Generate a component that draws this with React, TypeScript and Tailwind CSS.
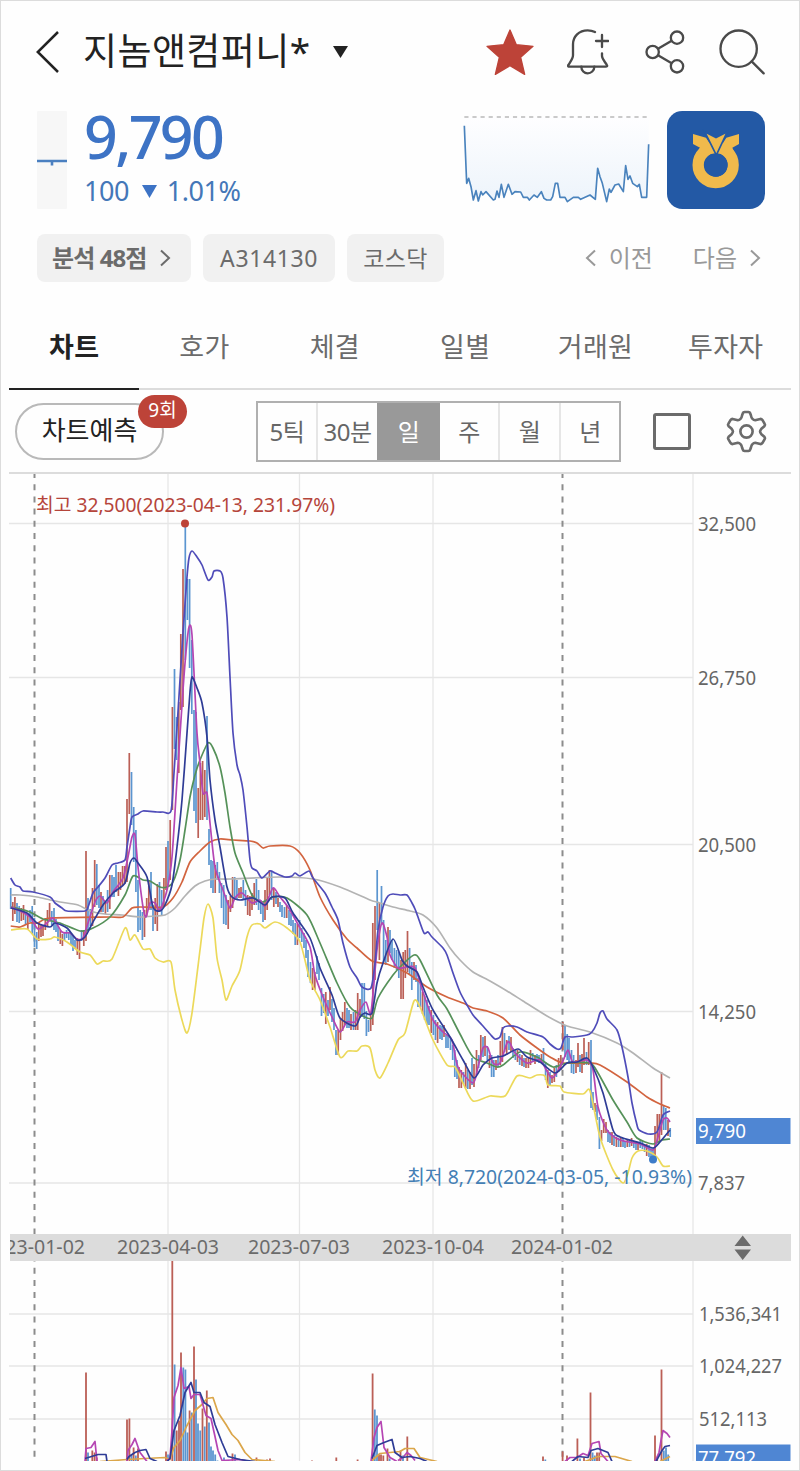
import React from 'react';

type Candle = [number, number, number, 'r' | 'b'];
type Bar = [number, number, 'r' | 'b'];

const RED = '#bb5f56';
const BLUE = '#5b95d0';

// x, high, low, direction
const CANDLES = `
10.7 888 909 b,12.8 902 921 r,14.9 897 914 r,17 903 922 b,19.2 906 923 b,21.3 908 921 r,23.5 905 920 r,25.6 912 925 b,27.8 915 930 r,30 910 922 b,
32.2 906 934 b,34.5 918 947 b,36.7 932 949 b,38.8 922 941 r,41 924 937 r,43 925 936 r,45.3 918 930 r,47.5 910 926 r,49.6 903 920 r,51.8 911 925 b,
54 908 930 b,56 919 932 b,58 926 941 b,60.3 930 944 r,62.4 934 946 r,64.5 933 941 b,66.6 930 938 b,68.8 932 940 b,71 933 945 b,73 936 951 b,
75 940 949 b,77.3 938 955 r,79.5 940 959 r,81.6 930 941 b,83.8 930 946 r,86 851 941 r,88 898 930 b,90.3 909 926 b,92.5 888 926 r,94.7 860 907 r,
96.8 864 905 b,99 885 908 b,101 892 912 r,103 896 912 b,105.4 903 914 r,107.6 890 912 b,109.8 875 909 r,112 875 897 b,114 877 897 b,116 865 892 b,
118.4 872 896 r,120.5 872 890 r,122.6 866 886 r,124.8 866 884 r,127 799 882 r,129.3 753 814 r,131.5 772 825 b,133.7 807 862 b,135.9 830 892 b,138 880 932 b,
140.2 910 930 b,142.4 912 940 b,144.5 910 937 r,146.7 898 916 r,148.8 880 910 r,151 872 910 b,153 905 931 b,155.2 898 924 r,157.3 884 931 r,159.5 882 912 b,
161.7 890 915 b,163.9 878 906 r,166 847 890 r,168 841 885 b,170.2 820 880 r,172.4 707 810 r,174.5 669 749 b,176.6 717 760 b,178.8 702 773 r,180.8 634 710 r,
183 569 707 r,185.3 525 660 b,187.4 579 620 b,189.6 579 668 b,191.8 640 714 b,194 710 811 b,196 712 823 b,198.2 788 838 r,200.4 763 820 r,202.6 761 820 r,
204.8 770 817 r,207 716 820 b,209 829 865 b,211 860 888 b,213 861 893 b,215.2 865 893 r,217.3 862 880 b,219.4 872 893 b,221.5 883 908 b,223.7 885 924 b,
226 895 925 b,228.2 900 929 r,230.4 896 912 r,232.6 877 908 r,234.7 877 900 b,236.9 880 900 b,239 888 898 r,241 887 898 r,243.3 880 900 b,245.5 890 906 b,
247.7 895 915 r,249.9 896 916 r,252 893 910 r,254.2 883 905 r,256.4 879 905 b,258.6 890 910 b,260.8 900 914 b,263 902 922 b,265 890 920 r,267.2 878 910 r,
269.4 870 895 r,271.6 872 900 b,273.8 888 907 r,276 892 904 b,278 898 907 r,280 902 912 b,282 905 917 b,284.5 907 918 b,286.7 905 918 r,289 910 925 b,
291 913 926 b,293 920 934 b,295.2 923 945 b,297.4 924 945 r,299.6 920 938 b,301.8 928 942 b,304 933 948 b,306 940 958 b,308 950 977 b,310.5 962 983 b,
312.6 968 990 r,314.8 972 990 r,317 956 974 b,319 963 980 b,321.5 988 1016 b,323.7 994 1013 b,325.8 992 1024 r,328 1000 1016 b,330 987 1010 r,332 999 1022 b,
334 1008 1030 b,336 1030 1055 b,338.2 1030 1055 r,340.5 1018 1040 r,342.6 1012 1031 r,344.8 1002 1025 r,347 1008 1028 b,349 1010 1028 b,351 1014 1030 r,353.5 1012 1030 b,
355.6 1010 1030 r,357.7 993 1030 r,360 999 1018 r,362 983 1017 b,364.3 983 1019 b,366.4 1011 1036 b,368.5 1020 1032 b,370.7 1014 1031 r,372.8 923 1025 r,375 906 980 r,
377.2 870 930 b,379.4 903 960 r,381.5 886 925 b,383.6 920 962 b,385.8 940 965 b,388 927 962 r,390 930 953 b,392 940 960 b,394.4 948 968 b,396.6 950 970 b,
398.8 952 978 b,401 960 999 r,403.2 952 999 r,405.3 950 978 r,407.5 931 972 r,409.6 948 974 b,411.8 962 990 b,414 962 980 r,416 965 982 b,418 978 1007 b,
420.4 982 1007 b,422.6 992 1014 r,424.7 996 1020 b,427 1000 1025 b,429 1006 1025 b,431.2 1010 1033 r,433.4 1015 1035 b,435.5 1020 1040 b,437.6 1022 1043 r,440 1025 1039 b,
442 1026 1040 b,444 1025 1037 r,446 1035 1048 b,448 1036 1048 b,450.5 1038 1050 b,452.7 1045 1060 b,454.8 1050 1077 b,457 1060 1079 b,459 1067 1088 r,461.3 1070 1088 r,
463.5 1072 1084 b,465.7 1063 1088 r,467.8 1070 1089 b,470 1072 1089 r,472 1058 1085 b,474 1064 1087 r,476.5 1050 1075 r,478.7 1055 1068 b,480.8 1035 1060 r,483 1037 1057 b,
485 1036 1056 r,487.3 1046 1060 b,489.5 1055 1068 r,491.6 1055 1077 b,493.8 1060 1077 b,496 1060 1070 r,498 1055 1067 b,500.3 1041 1065 r,502.4 1027 1062 r,504.5 1033 1052 b,
506.7 1040 1055 r,509 1036 1050 b,511 1037 1052 r,513 1048 1058 b,515.4 1050 1060 b,517.5 1050 1062 r,519.7 1054 1065 b,522 1055 1066 r,524 1058 1067 b,526 1058 1068 r,
528.4 1057 1068 r,530.5 1050 1065 r,532.7 1053 1062 b,535 1055 1064 r,537 1054 1062 b,539 1055 1063 b,541.5 1054 1063 r,543.5 1048 1065 b,545.6 1062 1080 b,547.8 1070 1088 r,
550 1072 1085 b,552 1075 1083 r,554.3 1068 1082 r,556.4 1065 1077 b,558.6 1058 1072 r,560.8 1055 1070 r,562.8 1022 1050 r,565 1025 1057 b,567.2 1034 1060 b,569 1038 1064 b,
571.5 1050 1073 b,573.6 1055 1074 b,576 1060 1073 r,578 1043 1067 r,580 1055 1072 b,582 1054 1073 r,584 1038 1065 r,586.5 1052 1065 b,588.7 1042 1065 r,591 1040 1108 b,
593 1092 1110 b,595 1103 1112 r,597 1105 1120 b,599.4 1117 1149 b,601.5 1130 1141 r,603.7 1119 1133 r,606 1122 1133 r,608 1130 1142 b,610 1132 1143 b,612 1132 1145 r,
614 1135 1146 b,616.4 1137 1147 r,618.6 1138 1147 b,620.8 1138 1147 r,623 1138 1147 b,625 1141 1148 b,627.3 1140 1147 r,629.5 1140 1147 b,631.6 1138 1146 r,633.8 1142 1148 b,
636 1142 1150 b,638 1142 1150 r,640.2 1140 1148 b,642.4 1141 1149 b,644.6 1144 1152 b,646.7 1144 1156 r,649 1145 1157 b,651 1148 1160 b,653 1148 1160 b,655 1126 1158 r,
657.3 1114 1142 r,659.4 1114 1141 r,661.5 1072 1135 r,663.7 1105 1130 b,665.8 1108 1130 b,668 1120 1136 r,670.2 1128 1137 b`
  .trim()
  .split(',')
  .map((row) => {
    const [x, hi, lo, dir] = row.trim().split(' ');
    return [Number(x), Number(hi), Number(lo), dir] as Candle;
  });

// x, top, direction
const VOLUMES = `
86 1372 r,88 1452 b,92.3 1450 r,94.6 1452 r,96.8 1457 r,127 1419 r,129.4 1418 r,131.5 1454 b,133.6 1447 r,135.8 1455 b,138 1448 r,166 1451 r,168 1454 b,
172.3 1260 r,174.6 1364 b,176.7 1430 r,179 1420 r,181 1352 r,183.3 1367 b,185.4 1369 b,187.5 1432 b,189.6 1410 r,191.7 1412 b,194 1346 r,196 1379 b,198 1423 b,
200.2 1430 b,202.5 1408 r,204.7 1426 b,206.8 1390 r,209 1422 b,211 1446 b,213 1450 b,215.2 1454 b,217.5 1460 b,224 1457 b,232.5 1453 r,235 1454 b,256.5 1457 r,
267 1459 r,270 1458 r,312 1460 r,336.3 1457 r,357.6 1459 r,372.6 1373 r,374.8 1409 b,377 1415 b,379 1454 r,381 1454 r,383.3 1455 r,387.5 1448 r,389.6 1458 b,
400.5 1450 r,403 1455 b,407.3 1436 r,543 1456 r,545.3 1459 b,562.6 1451 r,567 1455 r,577.4 1438 r,580 1458 b,584 1457 r,590.5 1392 r,592.6 1452 b,594.8 1455 b,
597 1452 r,599.2 1452 r,655 1435 r,657.2 1458 r,661.5 1369 r,663.8 1450 b,666 1447 b,668.2 1454 b`
  .trim()
  .split(',')
  .map((row) => {
    const [x, top, dir] = row.trim().split(' ');
    return [Number(x), Number(top), dir] as Bar;
  });

const PRICE_LINES = [
  {
    name: 'ma120',
    color: '#b3b3b3',
    points:
      '10.7,895 20,895 37,897 50,900 60,902 78,905 90,911 105,914 122,915 140,917 155,916 165,915 175,908 185,896 195,886 205,881 215,879 230,879 280,877 313,879 340,887 370,900 377,902 393,907 410,911 423,915 437,928 450,948 460,960 473,972 490,981 507,991 523,1001 547,1016 567,1026 590,1032 617,1043 633,1053 653,1068 670,1078',
  },
  {
    name: 'bandLow',
    color: '#ecd95a',
    points:
      '11,930 27,929 37,939 50,939 55,937 67,942 80,952 90,955 97,964 103,961 112,959 125,928 130,940 135,935 143,949 150,949 155,958 163,962 171,962 175,990 182,1020 187,1033 192,1013 200,950 204,918 208,904 213,918 217,958 222,980 226,1000 232,986 240,970 247,937 252,925 260,924 265,928 275,922 287,928 300,942 310,980 320,1000 330,1027 340,1057 348,1051 357,1051 362,1046 370,1048 375,1070 380,1078 388,1063 398,1040 405,1033 414,1001 420,1007 433,1040 447,1065 455,1067 463,1083 473,1101 490,1096 505,1096 517,1076 530,1078 537,1075 545,1076 548,1085 560,1086 564,1092 583,1094 590,1091 600,1137 613,1170 623,1183 628,1173 632,1158 638,1151 647,1151 657,1157 663,1166 670,1166',
  },
  {
    name: 'ma60',
    color: '#d2643f',
    points:
      '10.7,926 20,927 30,923 38,923 50,918 110,917 123,917 132,908 140,907 163,907 173,898 182,882 190,862 200,851 210,842 220,839 233,840 250,841 257,843 263,848 270,846 290,846 300,853 310,870 320,897 333,920 347,939 357,948 372,961 387,964 407,973 427,987 447,997 463,1003 473,1008 487,1011 503,1018 520,1035 537,1048 550,1057 563,1063 590,1063 600,1065 627,1082 647,1097 660,1104 670,1108',
  },
  {
    name: 'ma20',
    color: '#559159',
    points:
      '11,907 20,909 30,912 43,919 60,923 80,931 93,928 110,917 125,895 133,876 143,880 150,881 160,887 167,887 173,882 180,860 185,830 190,797 195,775 200,760 208,743 213,748 220,767 225,793 230,827 235,853 243,873 252,895 262,902 273,897 287,898 307,915 320,943 337,983 350,1007 363,1016 372,1018 378,998 393,975 403,964 414,955 420,960 437,995 447,1009 460,1034 473,1057 487,1063 497,1067 503,1065 520,1052 537,1057 553,1067 567,1063 590,1063 598,1073 613,1100 627,1122 637,1138 653,1144 662,1140 670,1139',
  },
  {
    name: 'ma5',
    color: '#b545b3',
    points:
      '11,907 20,911 30,917 38,929 47,923 53,918 62,932 70,933 77,939 83,938 88,923 95,902 100,896 107,903 113,892 123,878 128,857 132,837 135,835 138,867 143,907 146,917 150,903 155,903 160,910 167,890 172,857 177,780 183,690 186,652 189,627 192,635 197,733 200,763 203,793 207,793 210,823 215,867 223,890 230,908 235,898 242,893 252,903 260,900 265,906 273,888 280,897 288,907 300,928 310,947 315,975 323,997 332,1017 340,1032 347,1022 355,1022 360,1010 366,1002 371,1012 377,950 382,923 387,937 390,955 398,968 407,967 415,968 423,992 433,1020 443,1032 452,1040 458,1067 473,1083 478,1067 483,1048 488,1048 493,1063 500,1063 507,1043 510,1043 515,1053 527,1063 540,1060 552,1078 562,1063 568,1050 573,1062 587,1060 593,1070 598,1107 607,1130 620,1140 640,1144 653,1150 658,1137 663,1120 667,1118 670,1122',
  },
  {
    name: 'ma10',
    color: '#2f3c96',
    points:
      '11,908 27,913 37,923 50,927 55,923 67,928 77,940 85,937 93,922 103,905 113,893 125,883 130,863 134,858 138,863 147,877 153,907 160,911 165,905 172,885 177,847 182,800 187,733 190,692 192,677 197,688 202,703 207,737 210,780 215,820 220,847 227,887 232,897 240,900 253,898 265,905 272,897 285,898 293,913 310,938 320,968 332,995 340,1018 355,1026 360,1017 365,1013 372,1013 377,983 383,963 393,939 402,960 407,966 417,972 423,987 433,1010 450,1037 463,1060 474,1078 483,1065 492,1058 503,1056 518,1049 527,1057 540,1062 555,1073 567,1063 577,1062 587,1058 593,1067 603,1093 613,1130 620,1137 640,1143 653,1148 660,1142 670,1130',
  },
  {
    name: 'bandHigh',
    color: '#4f4cb9',
    points:
      '10.7,878 15,885 20,887 23,891 33,892 50,897 55,903 62,908 67,911 85,911 88,907 93,893 98,887 105,878 112,865 118,863 125,860 127,847 130,827 132,817 138,814 143,811 157,812 163,812 171,811 174,773 178,712 183,633 187,577 189,558 192,551 197,557 202,565 208,580 212,577 214,571 220,571 223,578 227,617 230,677 233,733 237,765 240,775 243,790 247,827 250,860 252,868 257,871 262,878 270,871 275,873 285,877 292,876 295,873 300,876 309,871 313,878 325,893 332,907 338,920 343,943 350,967 357,978 362,987 371,988 375,963 378,930 383,907 388,896 393,894 400,895 407,895 412,903 415,909 418,917 424,933 428,932 432,937 443,948 447,955 453,973 460,992 467,1005 473,1015 482,1025 490,1034 495,1039 500,1037 503,1028 508,1026 517,1027 527,1032 543,1037 550,1044 557,1049 561,1048 565,1037 573,1037 587,1035 592,1032 597,1023 600,1013 603,1011 607,1019 617,1030 622,1047 628,1077 632,1103 637,1125 639,1130 648,1134 657,1132 663,1115 670,1111',
  },
];

const VOLUME_LINES = [
  { color: '#dba64a', points: '100,1461 127,1459 145,1458 165,1457 170,1459 174,1447 180,1440 187,1425 195,1410 202,1404 207,1398 213,1397 218,1412 226,1424 232,1434 238,1440 245,1452 252,1459 275,1461' },
  { color: '#dba64a', points: '372,1460 380,1453 390,1452 400,1451 405,1448 414,1448 420,1457 437,1461' },
  { color: '#dba64a', points: '585,1461 598,1456 615,1456 632,1461' },
  { color: '#dba64a', points: '660,1461 670,1456' },
  { color: '#b545b3', points: '85,1461 86,1448 91,1447 95,1441 97,1461' },
  { color: '#b545b3', points: '127,1461 128,1450 132,1444 135,1438 140,1452 147,1461' },
  { color: '#b545b3', points: '167,1460 170,1458 172,1430 174,1397 178,1385 181,1367 184,1388 189,1386 191,1398 194,1394 200,1394 204,1408 206,1415 211,1418 215,1436 218,1450 222,1460 240,1459 250,1461' },
  { color: '#b545b3', points: '371,1461 374,1437 377,1427 381,1421 384,1447 390,1457 397,1461' },
  { color: '#b545b3', points: '398,1460 403,1457 407,1452 411,1455 415,1460' },
  { color: '#b545b3', points: '565,1461 570,1457 577,1457 583,1453 588,1455 592,1443 599,1441 601,1453 608,1461' },
  { color: '#b545b3', points: '655,1461 659,1452 661,1440 663,1430 667,1433 670,1437' },
  { color: '#2f3c96', points: '85,1458 98,1454 106,1454 107,1461' },
  { color: '#2f3c96', points: '127,1459 129,1456 135,1452 140,1450 146,1449 150,1458 157,1461' },
  { color: '#2f3c96', points: '167,1461 170,1458 174,1430 180,1415 185,1392 191,1382 194,1392 200,1392 204,1402 210,1406 215,1424 222,1442 228,1456 240,1459 255,1461' },
  { color: '#2f3c96', points: '372,1458 377,1445 384,1442 392,1439 395,1452 402,1457 410,1456 420,1458 427,1461' },
  { color: '#2f3c96', points: '572,1461 578,1456 588,1457 591,1450 598,1448 608,1452 612,1461' },
  { color: '#2f3c96', points: '656,1461 662,1450 665,1446 670,1445' },
];

const SPARKLINE =
  '193,377 200,550 206,535 213,560 220,600 228,572 235,603 243,575 248,585 258,575 280,600 285,598 291,573 297,592 304,553 312,592 325,553 336,583 345,575 362,576 370,592 382,592 388,600 402,585 412,592 424,575 432,595 440,600 452,600 458,590 466,550 473,550 480,592 495,592 502,605 520,592 535,592 542,598 570,585 586,598 593,505 600,530 607,550 620,605 628,567 633,577 645,555 656,552 670,575 677,497 684,538 690,528 698,550 712,560 718,553 725,592 740,592 746,433';

const PRICE_TICKS = [
  { y: 523.5, label: '32,500' },
  { y: 677.5, label: '26,750' },
  { y: 844.5, label: '20,500' },
  { y: 1011.5, label: '14,250' },
  { y: 1183, label: '7,837' },
];

const VOLUME_TICKS = [
  { y: 1313.5, label: '1,536,341', width: 83 },
  { y: 1365.5, label: '1,024,227', width: 83 },
  { y: 1418.5, label: '512,113', width: 68 },
];

const MONTH_LINES = [168, 299.5, 433];
const YEAR_LINES = [34.5, 562.5];

const TABS = ['차트', '호가', '체결', '일별', '거래원', '투자자'];

const PERIODS = [
  { label: '5틱', className: 'w-[58px]' },
  { label: '30분', className: 'w-[61px] border-l-2 border-[#e6e6e6]' },
  { label: '일', className: 'w-[63px] bg-[#999] text-white' },
  { label: '주', className: 'w-[58px]' },
  { label: '월', className: 'w-[61px] border-l-2 border-[#e6e6e6]' },
  { label: '년', className: 'w-[60px] border-l-2 border-[#e6e6e6]' },
];

// Catmull-Rom through the points, with reduced tension
const smoothPath = (points: string) => {
  const p = points.split(' ').map((pt) => pt.split(',').map(Number));
  let d = `M${p[0][0]} ${p[0][1]}`;
  for (let i = 0; i < p.length - 1; i++) {
    const a = p[i - 1] ?? p[i];
    const b = p[i];
    const c = p[i + 1];
    const e = p[i + 2] ?? c;
    const k = 8;
    d += `C${b[0] + (c[0] - a[0]) / k} ${b[1] + (c[1] - a[1]) / k} ${c[0] - (e[0] - b[0]) / k} ${c[1] - (e[1] - b[1]) / k} ${c[0]} ${c[1]}`;
  }
  return d;
};

const Chevron: React.FC<{ dir: 'left' | 'right'; className?: string }> = ({ dir, className }) => (
  <svg viewBox="0 0 12 18" className={className} fill="none" stroke="currentColor" strokeWidth="2">
    <path d={dir === 'left' ? 'M10 1.5 2 9l8 7.5' : 'M2 1.5 10 9l-8 7.5'} />
  </svg>
);

const Header: React.FC = () => (
  <header className="flex h-[102px] items-center pl-[35px] pr-[34px] text-[#222]">
    <svg viewBox="0 0 23 42" className="h-[42px] w-[23px]" fill="none" stroke="currentColor" strokeWidth="2.5">
      <path d="M22 1 1.8 21 22 41" />
    </svg>
    <h1 className="ml-[24px] whitespace-nowrap pb-[3px] text-[37px] leading-none tracking-[0.4px]">지놈앤컴퍼니*</h1>
    <svg viewBox="0 0 15 12" className="ml-[23px] h-3 w-[15px]" fill="currentColor">
      <path d="M0 0h15L7.5 12z" />
    </svg>
    <div className="ml-auto flex items-center text-[#4a4a4a]">
      <svg viewBox="0 0 144 138" className="h-[46px] w-12" fill="#bd4338" stroke="#bd4338" strokeWidth="4" strokeLinejoin="round">
        <path d="M72 3 91 47 141 52 104 85 116 136 72 110 28 136 40 85 3 52 53 47Z" />
      </svg>
      <svg viewBox="0 0 126 138" className="ml-[33px] h-[46px] w-[42px]" fill="none" stroke="currentColor" strokeWidth="7" strokeLinecap="round" strokeLinejoin="round">
        <path d="M84 9C76 5 69 4 62 4 36 4 18 22 18 46v33c0 10-6 17-14 29-2 4 0 5 4 5h108c4 0 6-2 3-6-7-11-14-18-14-26v-8" />
        <path d="M43 113c0 12 9 20 19 20s20-8 20-20" />
        <path d="M105 18v36M87 36h37" />
      </svg>
      <svg viewBox="0 0 120 132" className="ml-[36px] h-11 w-10" fill="none" stroke="currentColor" strokeWidth="7">
        <circle cx="23" cy="66" r="18.5" />
        <circle cx="96" cy="23" r="18.5" />
        <circle cx="96" cy="109" r="18.5" />
        <path d="M39 56 80 32M39 76l41 24" />
      </svg>
      <svg viewBox="0 0 138 138" className="ml-[34px] h-[46px] w-[46px]" fill="none" stroke="currentColor" strokeWidth="7" strokeLinecap="round">
        <circle cx="59" cy="59" r="54.5" />
        <path d="m98 97 36 36" />
      </svg>
    </div>
  </header>
);

const BrokerLogo: React.FC = () => (
  <svg viewBox="0 0 294 294" className="ml-4 h-[98px] w-[98px]">
    <rect width="294" height="294" rx="46" fill="#2359a5" />
    <circle cx="146" cy="162" r="52.5" fill="none" stroke="#f0ba4c" strokeWidth="34" />
    <path d="M78 69 117 80 148 127 178 80 216 69V99L196 110 204 128 148 129 90 128 99 110 78 99Z" fill="#f0ba4c" />
    <path d="M113 62 147 80 181 62 148 132Z" fill="#f0ba4c" stroke="#2359a5" strokeWidth="5" />
    <circle cx="147" cy="162" r="35" fill="#2359a5" />
  </svg>
);

const PriceSummary: React.FC = () => (
  <section className="mt-2 flex h-[98px] pl-9">
    <svg viewBox="0 0 30 98" className="h-[98px] w-[30px]">
      <rect width="30" height="98" rx="1" fill="#f7f7f7" />
      <path d="M0 50h30M15 50v4.5" stroke="#4a7fc0" strokeWidth="2.6" />
    </svg>
    <div className="ml-[17px] flex w-[220px] flex-col whitespace-nowrap">
      <div className="-mt-[2px] h-[66px] text-[59px] font-medium leading-[54px] tracking-[-2.6px] text-[#3d73c5]">9,790</div>
      <div className="flex h-9 items-center text-[27px] leading-9 tracking-[-0.5px] text-[#4477b8]">
        100
        <svg viewBox="0 0 15 13" className="ml-[13px] mr-[10px] h-[13px] w-[15px]" fill="#3d73c5">
          <path d="M0 0h15L7.5 13z" />
        </svg>
        1.01%
      </div>
    </div>
    <svg viewBox="189 333 564 294" className="ml-auto h-[98px] w-[188px]">
      <defs>
        <linearGradient id="spark" x1="0" y1="0" x2="0" y2="1">
          <stop offset="0" stopColor="#fefeff" />
          <stop offset="1" stopColor="#edf4fb" />
        </linearGradient>
      </defs>
      <path d={`M193 351 L${SPARKLINE.split(' ').join(' L')} L746 351Z`} fill="url(#spark)" />
      <path d="M193 351H744" stroke="#b9b9b9" strokeWidth="4.5" strokeDasharray="12.5 11.8" />
      <polyline points={SPARKLINE} fill="none" stroke="#4a83bd" strokeWidth="5" strokeLinejoin="round" />
    </svg>
    <div className="mr-[34px]">
      <BrokerLogo />
    </div>
  </section>
);

const ChipRow: React.FC = () => (
  <section className="mt-[25px] flex h-12 items-center whitespace-nowrap pl-9 pr-[38px] text-[23px] text-[#6b6b6b]">
    <span className="flex h-12 w-[154px] items-center rounded-lg bg-[#f1f1f1] pl-[15px] text-[24px] font-bold tracking-[-0.9px]">
      분석 48점
      <Chevron dir="right" className="ml-3 h-[18px] w-3" />
    </span>
    <span className="ml-3 flex h-12 w-[132px] items-center justify-center rounded-lg bg-[#f1f1f1] tracking-[0.6px]">A314130</span>
    <span className="ml-3 flex h-12 w-[97px] items-center justify-center rounded-lg bg-[#f1f1f1] tracking-[0.3px]">코스닥</span>
    <span className="ml-auto flex items-center text-[24px] text-[#999]">
      <Chevron dir="left" className="mr-3 h-[18px] w-3" />
      이전
    </span>
    <span className="ml-10 flex items-center text-[24px] text-[#999]">
      다음
      <Chevron dir="right" className="ml-3 h-[18px] w-3" />
    </span>
  </section>
);

const TabBar: React.FC = () => (
  <nav className="mx-2 mt-7 flex h-[80px] border-b-2 border-[#dcdcdc]">
    {TABS.map((tab, i) => (
      <button
        key={tab}
        className={`h-[80px] w-[130.5px] border-b-2 pb-[5px] text-[27px] leading-none tracking-[0.3px] ${
          i === 0 ? 'border-[#222] font-bold text-[#222]' : 'border-transparent text-[#6b6b6b]'
        }`}
      >
        {tab}
      </button>
    ))}
  </nav>
);

const Toolbar: React.FC = () => (
  <section className="mx-2 flex h-[84px] items-center border-b-2 border-[#dcdcdc]">
    <div className="relative ml-[6px] flex h-[57px] w-[149px] items-center justify-center rounded-full border-2 border-[#b9b9b9] pb-[3px] text-[26px] leading-none text-[#222]">
      차트예측
      <span className="absolute -right-[25px] -top-[10px] flex h-[33px] w-[49px] items-center justify-center rounded-full bg-[#bd4338] pb-px text-[19px] leading-none text-white">
        9회
      </span>
    </div>
    <div className="ml-[92px] flex h-[61px] border-2 border-[#b0b0b0] text-[24px] text-[#666]">
      {PERIODS.map(({ label, className }) => (
        <button key={label} className={`whitespace-nowrap pt-0.5 leading-none tracking-[-0.5px] ${className}`}>
          {label}
        </button>
      ))}
    </div>
    <span className="ml-8 h-[37px] w-[38px] rounded-[3px] border-[3px] border-[#6b6b6b]" />
    <svg viewBox="-62 -64 124 128" className="ml-[35px] h-[43px] w-[41px]" fill="none" stroke="#6b6b6b" strokeWidth="8" strokeLinejoin="round">
      <path d="M-18-38Q-15-40-13-50L-11-55Q-10-59-6-59H6Q10-59 11-55L13-50Q15-40 18-38 22-34 26-34L42-38Q46-38 48-35L55-23Q57-20 54-16L45-8Q41-3 41 0 41 3 45 8L54 16Q57 20 55 23L48 35Q46 38 42 38L26 34Q22 34 18 38 15 40 13 50L11 55Q10 59 6 59H-6Q-10 59-11 55L-13 50Q-15 40-18 38-22 34-26 34L-42 38Q-46 38-48 35L-55 23Q-57 20-54 16L-45 8Q-41 3-41 0-41-3-45-8L-54-16Q-57-20-55-23L-48-35Q-46-38-42-38L-26-34Q-22-34-18-38Z" />
      <circle r="18.5" />
    </svg>
  </section>
);

const PriceChart: React.FC = () => (
  <svg viewBox="9 474 782 760" className="mx-2 h-[760px] w-[782px]" fontSize="19.5" fill="#666">
    <g stroke="#e6e6e6" strokeWidth="1.3">
      {PRICE_TICKS.map(({ y }) => (
        <path key={y} d={`M9 ${y}H693`} />
      ))}
      {[...MONTH_LINES, 693].map((x) => (
        <path key={x} d={`M${x} 474V1234`} />
      ))}
    </g>
    {YEAR_LINES.map((x) => (
      <path key={x} d={`M${x} 474V1234`} stroke="#8c8c8c" strokeWidth="2" strokeDasharray="6 6.2" strokeDashoffset="2" />
    ))}
    {CANDLES.map(([x, hi, lo, dir]) => (
      <rect key={x} x={x - 0.85} y={hi} width="1.7" height={lo - hi} fill={dir === 'r' ? RED : BLUE} />
    ))}
    {PRICE_LINES.map(({ name, color, points }) => (
      <path key={name} d={smoothPath(points)} fill="none" stroke={color} strokeWidth="1.7" strokeLinejoin="round" />
    ))}
    <circle cx="185" cy="523.5" r="4" fill="#bd4338" />
    <circle cx="653" cy="1159.5" r="4" fill="#3d7cc9" />
    <text x="36" y="512" fill="#b5453b" textLength="299" lengthAdjust="spacingAndGlyphs">
      최고 32,500(2023-04-13, 231.97%)
    </text>
    <text x="407" y="1184" fill="#447fb5" textLength="285" lengthAdjust="spacingAndGlyphs">
      최저 8,720(2024-03-05, -10.93%)
    </text>
    {PRICE_TICKS.map(({ y, label }) => (
      <text key={label} x="698" y={y + 7} textLength={label.length > 5 ? 58 : 47} lengthAdjust="spacingAndGlyphs">
        {label}
      </text>
    ))}
    <rect x="696" y="1118" width="94.5" height="26" fill="#4f86d3" />
    <text x="698" y="1138" fill="#fff" textLength="48" lengthAdjust="spacingAndGlyphs">
      9,790
    </text>
  </svg>
);

const DateAxis: React.FC = () => (
  <svg viewBox="10 1234 781 26.5" className="ml-[9px] h-[26.5px] w-[781px] bg-[#dcdcdc]" fontSize="19.5" fill="#6b6b6b">
    {[
      { x: -17, label: '2023-01-02' },
      { x: 117, label: '2023-04-03' },
      { x: 248, label: '2023-07-03' },
      { x: 382, label: '2023-10-04' },
      { x: 511, label: '2024-01-02' },
    ].map(({ x, label }) => (
      <text key={label} x={x} y="1254" textLength="102" lengthAdjust="spacingAndGlyphs">
        {label}
      </text>
    ))}
    <path d="M742.7 1235.5 751 1246H734.5ZM742.7 1260 751 1249.5H734.5Z" />
  </svg>
);

const VolumeChart: React.FC = () => (
  <svg viewBox="9 1260.5 782 200.5" className="mx-2 h-[200.5px] w-[782px]" fontSize="19.5" fill="#666">
    <g stroke="#e6e6e6" strokeWidth="1.3">
      {VOLUME_TICKS.map(({ y }) => (
        <path key={y} d={`M9 ${y}H693`} />
      ))}
      {[...MONTH_LINES, 693].map((x) => (
        <path key={x} d={`M${x} 1260V1461`} />
      ))}
    </g>
    {YEAR_LINES.map((x) => (
      <path key={x} d={`M${x} 1260V1458`} stroke="#8c8c8c" strokeWidth="2" strokeDasharray="6 6.2" strokeDashoffset="5" />
    ))}
    {VOLUMES.map(([x, top, dir]) => (
      <rect key={x} x={x - 0.9} y={top} width="1.8" height={1461 - top} fill={dir === 'r' ? RED : BLUE} />
    ))}
    {VOLUME_LINES.map(({ color, points }) => (
      <polyline key={color + points} points={points} fill="none" stroke={color} strokeWidth="1.7" strokeLinejoin="round" />
    ))}
    {VOLUME_TICKS.map(({ y, label, width }) => (
      <text key={label} x="699" y={y + 7} textLength={width} lengthAdjust="spacingAndGlyphs">
        {label}
      </text>
    ))}
    <rect x="696" y="1444" width="94.5" height="17" fill="#4f86d3" />
    <text x="698" y="1464" fill="#fff" textLength="58" lengthAdjust="spacingAndGlyphs">
      77,792
    </text>
  </svg>
);

const App: React.FC = () => (
  <div className="flex h-[1471px] w-[800px] flex-col overflow-hidden border border-[#dcdcdc] bg-[#fefefe] font-['Noto_Sans','Noto_Sans_CJK_KR',sans-serif]">
    <Header />
    <PriceSummary />
    <ChipRow />
    <TabBar />
    <Toolbar />
    <PriceChart />
    <DateAxis />
    <VolumeChart />
  </div>
);

export default App;
